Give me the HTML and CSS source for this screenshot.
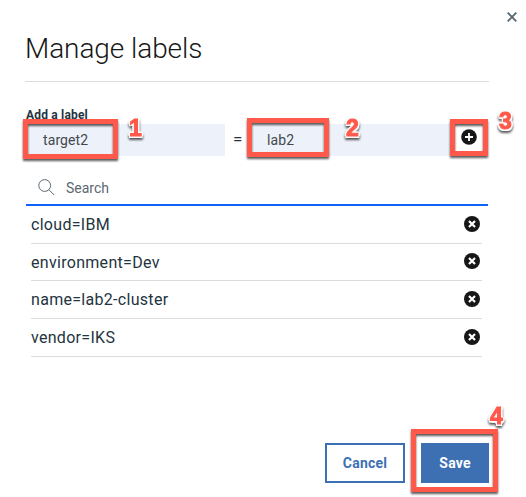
FILE: index.html
```html
<!DOCTYPE html>
<html lang="en">
<head>
<meta charset="utf-8">
<title>Manage labels</title>
<link rel="stylesheet" href="styles.css">
</head>
<body>
<svg class="symbols" width="0" height="0">
  <symbol id="remove" viewBox="0 0 16 16"><circle cx="8" cy="8" r="8" fill="#171717"/><path d="M5 5l6 6M11 5l-6 6" stroke="#fff" stroke-width="2.2"/></symbol>
</svg>
<main class="modal">
  <button class="close" aria-label="Close"><svg width="10" height="10" viewBox="0 0 10 10"><path d="M.7.7l8.6 8.6M9.3.7L.7 9.3" stroke="#5a6872" stroke-width="1.9"/></svg></button>
  <header class="header"><h1>Manage labels</h1></header>
  <section class="add">
    <div class="add-label">Add a label</div>
    <div class="add-row">
      <div class="field">target2</div>
      <div class="equals">=</div>
      <div class="field field-value">lab2</div>
      <button class="plus" aria-label="Add"><svg width="16" height="16" viewBox="0 0 16 16"><circle cx="8" cy="8" r="7.8" fill="#171717"/><path d="M8 4v8M4 8h8" stroke="#fff" stroke-width="1.8"/></svg></button>
    </div>
  </section>
  <div class="search">
    <svg width="17" height="17" viewBox="0 0 17 17"><circle cx="6.7" cy="6.5" r="5.9" fill="none" stroke="#5a6872" stroke-width="1"/><path d="M11 10.8l5.2 5.2" stroke="#5a6872" stroke-width="1"/></svg>
    <span>Search</span>
  </div>
  <ul class="labels">
    <li><span>cloud=IBM</span><svg class="remove"><use href="#remove"/></svg></li>
    <li><span>environment=Dev</span><svg class="remove"><use href="#remove"/></svg></li>
    <li><span>name=lab2-cluster</span><svg class="remove"><use href="#remove"/></svg></li>
    <li><span>vendor=IKS</span><svg class="remove"><use href="#remove"/></svg></li>
  </ul>
  <footer class="actions">
    <button class="btn cancel">Cancel</button>
    <button class="btn save">Save</button>
  </footer>
</main>
<div class="mark m1"></div><div class="num n1">1</div>
<div class="mark m2"></div><div class="num n2">2</div>
<div class="mark m3"></div><div class="num n3">3</div>
<div class="num n4">4</div><div class="mark m4"></div>
</body>
</html>
```
FILE: styles.css
```css
* { box-sizing: border-box; }
body { margin: 0; width: 526px; height: 497px; overflow: hidden; position: relative; background: #fff; font-family: Roboto, "Liberation Sans", sans-serif; color: #23343f; }
button { padding: 0; border: 0; background: none; font-family: inherit; }
.symbols { position: absolute; }
.modal { display: flex; flex-direction: column; padding: 0 37px 0 26px; height: 497px; }
.close { position: absolute; left: 507px; top: 12px; width: 10px; height: 10px; display: flex; }
.header { height: 82px; margin-left: -1px; border-bottom: 1px solid #dcdcdc; padding-top: 31px; }
h1 { margin: 0; font-size: 28px; line-height: 36px; font-weight: 300; color: #171717; letter-spacing: -.07px; white-space: nowrap; }
.add-label { height: 42px; padding-top: 25px; font-size: 12px; line-height: 16px; font-weight: 700; letter-spacing: .18px; white-space: nowrap; }
.add-row { display: flex; height: 32px; width: 462px; }
.field { width: 199px; background: #edf1f9; padding-left: 17px; font-size: 14px; line-height: 32px; color: #43484e; letter-spacing: .1px; }
.field-value { padding-left: 15px; }
.equals { width: 27px; font-size: 17px; line-height: 31px; padding-left: 8px; }
.plus { width: 37px; padding: 5px 0 0 9.5px; display: flex; }
.search { display: flex; align-items: center; width: 462px; height: 50px; padding: 15px 0 0 12px; border-bottom: 2px solid #0f62fe; gap: 11px; font-size: 14px; line-height: 20px; color: #5a6872; }
.labels { margin: 0 0 0 5px; padding: 0; list-style: none; width: 451px; display: grid; grid-template-rows: 38px 37px 38px 38px; }
.labels li { display: flex; align-items: center; justify-content: space-between; border-bottom: 1px solid #dcdcdc; font-size: 16px; letter-spacing: .3px; padding-right: 2.5px; }
.remove { width: 16px; height: 16px; margin-top: -2px; }
.actions { display: flex; justify-content: flex-end; gap: 16px; margin-top: 86px; }
.btn { height: 40px; border: 2px solid #3d70b2; font-size: 14px; font-weight: 700; letter-spacing: .2px; }
.cancel { width: 80px; color: #3d70b2; }
.save { width: 68px; color: #fff; background: #3d70b2; }
.mark { position: absolute; border: 5px solid #ff594b; filter: drop-shadow(0 2px 1.2px rgba(0,0,0,.65)); }
.m1 { left: 23px; top: 119px; width: 95px; height: 40px; }
.m2 { left: 247px; top: 118px; width: 82px; height: 39px; }
.m3 { left: 450px; top: 119px; width: 38px; height: 37px; }
.m4 { left: 411px; top: 429px; width: 87px; height: 63px; }
.num {
  position: absolute;
  font: 700 23px/28px "Liberation Sans", sans-serif;
  color: #ff594b;
  -webkit-text-stroke: 1px #ff594b;
  text-shadow: 2px 0 #fff, -2px 0 #fff, 0 2px #fff, 0 -2px #fff, 1.5px 1.5px #fff, -1.5px 1.5px #fff, 1.5px -1.5px #fff, -1.5px -1.5px #fff;
  filter: drop-shadow(0 2px 1.3px rgba(0,0,0,.65));
}
.n1 { left: 129px; top: 114px; }
.n2 { left: 346px; top: 114px; }
.n3 { left: 499px; top: 107px; }
.n4 { left: 490px; top: 402px; }
```
